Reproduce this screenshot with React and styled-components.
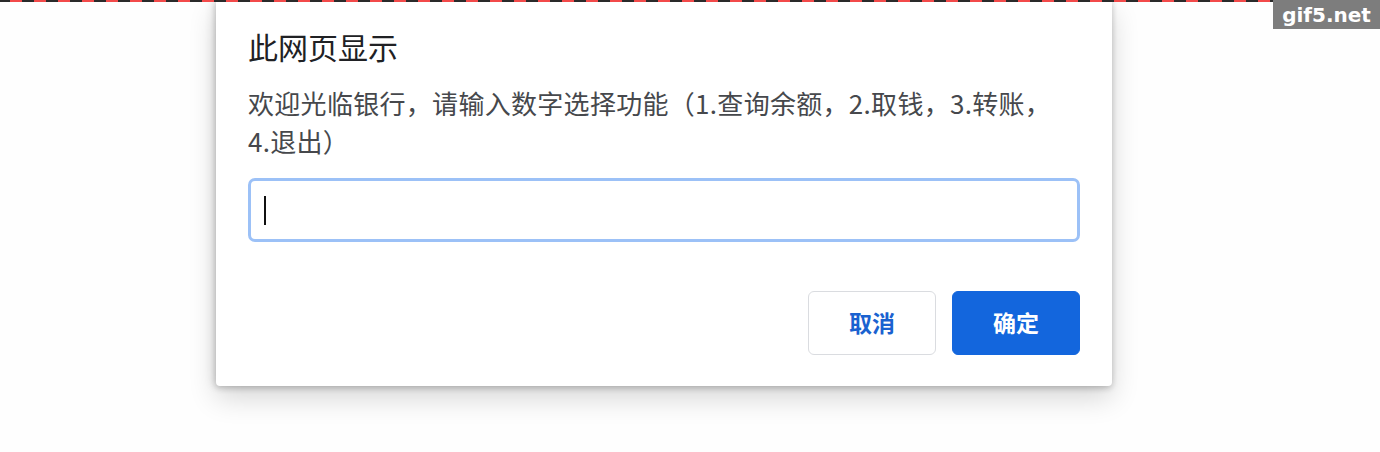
import React from 'react';
import styled, { createGlobalStyle } from 'styled-components';

const GlobalStyle = createGlobalStyle`
  html, body {
    margin: 0;
    padding: 0;
    background: #fefefe;
    overflow: hidden;
  }
  body {
    font-family: "Noto Sans CJK SC", "Noto Sans", sans-serif;
  }
`;

const Page = styled.div`
  width: 1380px;
  height: 452px;
  display: flex;
  justify-content: flex-start;
  padding-left: 216px;
  box-sizing: border-box;
`;

const TopRule = styled.div`
  position: fixed;
  top: 0;
  left: 0;
  right: 0;
  height: 2px;
  background: repeating-linear-gradient(90deg, #2a2a2a 0 10px, #f24a4a 10px 22px, #2a2a2a 22px 24px);
  z-index: 5;
`;

const Watermark = styled.div`
  position: fixed;
  top: 0;
  right: 0;
  width: 107px;
  height: 29px;
  background: #7d7d7d;
  color: #fff;
  font-family: "DejaVu Sans", sans-serif;
  font-weight: bold;
  font-size: 20px;
  display: flex;
  align-items: center;
  justify-content: center;
  z-index: 6;
`;

const Dialog = styled.div`
  width: 896px;
  height: 386px;
  box-sizing: border-box;
  background: #fff;
  border-radius: 0 0 4px 4px;
  box-shadow: 0 12px 28px rgba(0, 0, 0, 0.16), 0 2px 6px rgba(0, 0, 0, 0.18),
    -3px 0 10px rgba(0, 0, 0, 0.1);
  padding: 24px 32px 31px;
  display: flex;
  flex-direction: column;
`;

const Title = styled.div`
  font-size: 30px;
  line-height: 44px;
  color: #202124;
`;

const Message = styled.div`
  margin-top: 16px;
  font-size: 26px;
  line-height: 38px;
  color: #46484c;
  letter-spacing: 0.3px;
`;

const Field = styled.div`
  margin-top: 18px;
  height: 64px;
  box-sizing: border-box;
  border: 3px solid #9cc1f7;
  border-radius: 7px;
  display: flex;
  align-items: center;
  padding-left: 13px;
`;

const Caret = styled.span`
  width: 2px;
  height: 29px;
  background: #111;
`;

const Actions = styled.div`
  margin-top: auto;
  display: flex;
  justify-content: flex-end;
  gap: 16px;
`;

const Button = styled.button`
  width: 128px;
  height: 64px;
  border-radius: 6px;
  font-family: "Noto Sans CJK SC", sans-serif;
  font-size: 23px;
  font-weight: bold;
  padding: 0 0 3px;
  border: 1px solid ${p => (p.$primary ? '#1366dd' : '#dadce0')};
  background: ${p => (p.$primary ? '#1366dd' : '#fff')};
  color: ${p => (p.$primary ? '#fff' : '#1a62d0')};
  cursor: pointer;
`;

export default function App() {
  return (
    <>
      <GlobalStyle />
      <TopRule />
      <Watermark>gif5.net</Watermark>
      <Page>
        <Dialog>
          <Title>此网页显示</Title>
          <Message>
            欢迎光临银行，请输入数字选择功能（1.查询余额，2.取钱，3.转账，
            <br />
            4.退出）
          </Message>
          <Field>
            <Caret />
          </Field>
          <Actions>
            <Button>取消</Button>
            <Button $primary>确定</Button>
          </Actions>
        </Dialog>
      </Page>
    </>
  );
}
